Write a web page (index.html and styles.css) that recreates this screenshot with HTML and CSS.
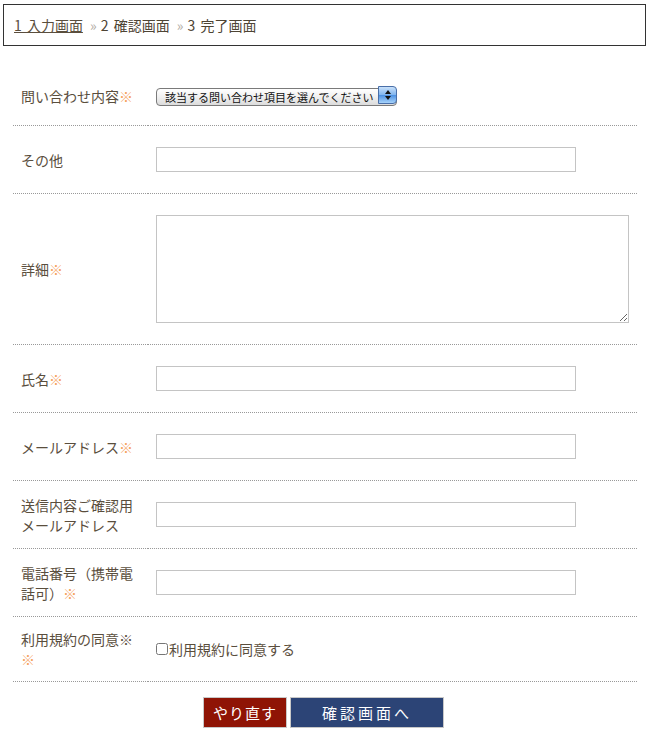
FILE: index.html
```html
<!DOCTYPE html>
<html lang="ja">
<head>
    <meta charset="UTF-8">
    <meta name="viewport" content="width=device-width, initial-scale=1.0">
    <title>お問い合わせ</title>
    <link rel="stylesheet" href="styles.css">
</head>
<body>
    <div class="steps">
        <a href="#" class="current">1 入力画面</a>
        <span class="sep">»</span>2 確認画面
        <span class="sep">»</span>3 完了画面
    </div>

    <form class="contact-form">
        <table class="form-table">
            <tr>
                <th>問い合わせ内容<span class="req">※</span></th>
                <td>
                    <span class="select-wrap">
                        <select name="category">
                            <option>該当する問い合わせ項目を選んでください</option>
                        </select>
                        <span class="select-btn">
                            <svg width="8" height="12" viewBox="0 0 8 12">
                                <path d="M4 1 L7 5 L1 5 Z" fill="#111"/>
                                <path d="M4 11 L7 7 L1 7 Z" fill="#111"/>
                            </svg>
                        </span>
                    </span>
                </td>
            </tr>
            <tr>
                <th>その他</th>
                <td><input type="text" class="text-input" name="other"></td>
            </tr>
            <tr>
                <th>詳細<span class="req">※</span></th>
                <td><textarea name="detail"></textarea></td>
            </tr>
            <tr>
                <th>氏名<span class="req">※</span></th>
                <td><input type="text" class="text-input" name="name"></td>
            </tr>
            <tr>
                <th>メールアドレス<span class="req">※</span></th>
                <td><input type="text" class="text-input" name="email"></td>
            </tr>
            <tr>
                <th>送信内容ご確認用メールアドレス</th>
                <td><input type="text" class="text-input" name="email2"></td>
            </tr>
            <tr>
                <th>電話番号（携帯電話可）<span class="req">※</span></th>
                <td><input type="text" class="text-input" name="tel"></td>
            </tr>
            <tr>
                <th><span class="nowrap">利用規約の同意※</span><br><span class="req">※</span></th>
                <td class="agree"><label><input type="checkbox" name="agree">利用規約に同意する</label></td>
            </tr>
        </table>

        <div class="buttons">
            <button type="reset" class="btn-reset">やり直す</button>
            <button type="submit" class="btn-confirm">確認画面へ</button>
        </div>
    </form>
</body>
</html>
```

FILE: styles.css
```css
body {
    margin: 0;
    padding: 0;
    font-family: "Noto Sans CJK JP", "Noto Sans", sans-serif;
    font-size: 14px;
    color: #5a4e3d;
    background-color: #fff;
}

.steps {
    margin: 4px 1px 0 3px;
    border: 1px solid #333;
    height: 40px;
    line-height: 40px;
    padding: 0 10px;
    color: #4e4434;
    word-spacing: 2px;
}

.steps a {
    color: #5a4e3d;
    text-decoration: underline;
}

.steps .sep {
    color: #b0aaa2;
    margin: 0 4px 0 2px;
}

.contact-form {
    margin: 21px 0 0 13px;
    width: 624px;
}

.form-table {
    width: 100%;
    border-collapse: collapse;
}

.form-table th,
.form-table td {
    border-bottom: 1px dotted #999;
    padding: 12px 8px;
    vertical-align: middle;
    text-align: left;
    font-weight: normal;
    line-height: 20px;
}

.form-table th {
    width: 119px;
}

.nowrap {
    white-space: nowrap;
}

.req {
    color: #f5a15c;
}

.text-input {
    display: block;
    box-sizing: border-box;
    width: 420px;
    height: 25px;
    margin: 9px 0;
    border: 1px solid #c4c4c4;
    padding: 2px 4px;
}

textarea {
    display: block;
    box-sizing: border-box;
    width: 473px;
    height: 108px;
    margin: 9px 0;
    border: 1px solid #c4c4c4;
    padding: 2px 4px;
}

.select-wrap {
    position: relative;
    display: block;
    width: 241px;
    height: 18px;
    margin: 7px 0 9px;
}

.select-wrap select {
    -webkit-appearance: none;
    appearance: none;
    box-sizing: border-box;
    width: 241px;
    height: 18px;
    margin: 0;
    padding: 0 0 0 8px;
    border: 1px solid #7a7a7a;
    border-radius: 4px;
    background: linear-gradient(#ffffff, #f0f0f0 50%, #dcdcdc);
    font-family: "Noto Sans CJK JP", sans-serif;
    font-size: 11px;
    line-height: 16px;
    color: #111;
}

.select-btn {
    position: absolute;
    top: 0;
    right: 0;
    box-sizing: border-box;
    width: 19px;
    height: 18px;
    border: 1px solid #4a6fa8;
    border-radius: 0 4px 4px 0;
    background: linear-gradient(#c9e1fa, #7fb4ee 50%, #4b90e2 51%, #a6d2fa);
    display: flex;
    align-items: center;
    justify-content: center;
}

.agree label {
    display: flex;
    align-items: center;
}

.agree input {
    width: 12px;
    height: 12px;
    margin: 0 1px 0 0;
}

.buttons {
    margin-top: 15px;
    text-align: center;
    margin-left: -13px;
    width: 647px;
}

.buttons button {
    height: 31px;
    border: 1px solid #c8c8c8;
    color: #fff;
    font-family: "Noto Sans CJK JP", sans-serif;
    font-size: 15px;
    cursor: pointer;
    vertical-align: top;
}

.btn-reset {
    width: 84px;
    background-color: #8f1405;
    letter-spacing: 1px;
}

.btn-confirm {
    width: 154px;
    background-color: #2c4476;
    letter-spacing: 3px;
}
```
